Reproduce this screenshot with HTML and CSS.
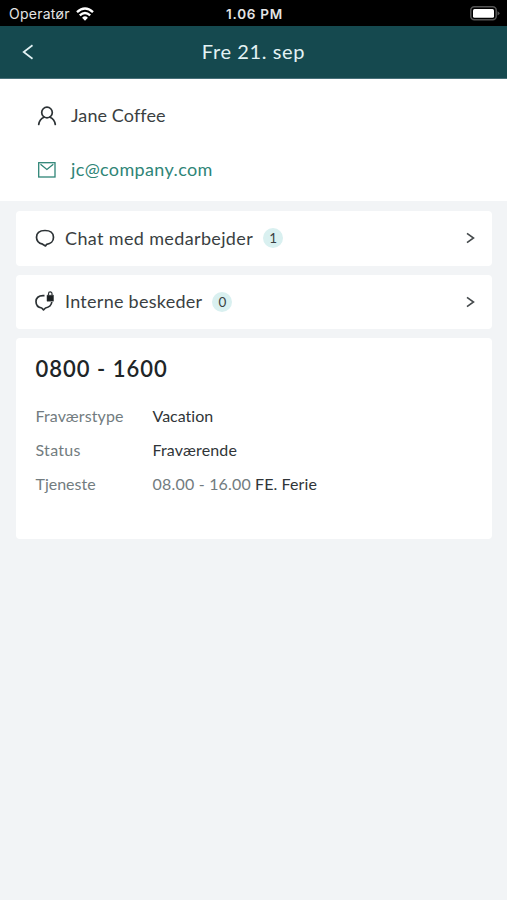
FILE: index.html
```html
<!DOCTYPE html>
<html lang="da">
<head>
<meta charset="utf-8">
<title>Fre 21. sep</title>
<link rel="stylesheet" href="styles.css">
</head>
<body>
<div class="status-bar">
  <div class="carrier"><span>Operatør</span>
    <svg width="18" height="14" viewBox="0 0 18 14" fill="none" stroke="#fff" stroke-width="2.4"><path d="M1 5.1Q9-2.3 17 5.1"/><path d="M3.8 8.3Q9 3.6 14.2 8.3"/><path d="M6.1 10.7Q9 8 11.9 10.7L9 13.7Z" fill="#fff" stroke="none"/></svg>
  </div>
  <div class="clock">1.06 PM</div>
  <svg class="battery" width="30" height="15" viewBox="0 0 30 15"><rect x=".8" y=".8" width="25.4" height="13" rx="3.5" fill="none" stroke="#555" stroke-width="1.5"/><rect x="3" y="3" width="21" height="8.7" rx="1.5" fill="#fff"/><path d="M27.5 5.2Q29.5 6 29.5 7.3T27.5 9.4Z" fill="#555"/></svg>
</div>
<header class="header">
  <svg class="back" width="12" height="16" viewBox="0 0 12 16" fill="none" stroke="#e3f2f4" stroke-width="1.7"><path d="M10.5 1.3 1.7 8l8.800 6.700"/></svg>
  <h1>Fre 21. sep</h1>
</header>
<section class="contact">
  <div class="contact-row">
    <svg width="20" height="20" viewBox="0 0 20 20" fill="none" stroke="#2c3235" stroke-width="1.7" stroke-linecap="round"><circle cx="10" cy="6.5" r="5.3"/><path d="M1.700 18.500C2.300 14.500 4.300 12.300 7 11.200M18.300 18.500C17.700 14.500 15.700 12.300 13 11.200"/></svg>
    <span class="name">Jane Coffee</span>
  </div>
  <div class="contact-row mail">
    <svg width="20" height="20" viewBox="0 0 20 20" fill="none" stroke="#2f8577" stroke-width="1.3"><rect x="1.7" y="2.7" width="16.3" height="14.3"/><path d="m3.500 4.300 6.400 5.200 6.400-5.200"/></svg>
    <a class="address">jc@company.com</a>
  </div>
</section>
<main class="cards">
  <div class="card link">
    <svg width="22" height="22" viewBox="0 0 22 22" fill="none" stroke="#2c3235" stroke-width="1.7" stroke-linejoin="round"><path d="M8.600 17.200C4.700 16.300 2.500 13.500 2.500 10.300C2.500 5.500 6 3.500 11 3.500S19.500 5.500 19.500 10.300C19.500 14.500 16.500 17 12.700 17.300L11.500 18.900Z"/></svg>
    <span class="chat-label">Chat med medarbejder</span><span class="badge">1</span>
    <svg class="chevron" width="9" height="12" viewBox="0 0 9 12"><path d="M1 1.300 7.500 6 1 10.700"/></svg>
  </div>
  <div class="card link">
    <svg width="22" height="22" viewBox="0 0 22 22" fill="none" stroke="#2c3235" stroke-width="1.7" stroke-linejoin="round"><path d="M10.500 4.600H9C4.500 4.600 2 7 2 10.500C2 14 4.500 16.500 7.700 17L9.500 18.900L11.500 17C15 16.300 17.400 14 17.800 11"/><path d="M13 4.200h6.500v6H13z" fill="#1c2022" stroke-width=".5"/><path d="M14.500 4.500V2.700a1.750 1.750 0 0 1 3.500 0v1.800" stroke-width="1.200"/></svg>
    <span class="internal-label">Interne beskeder</span><span class="badge">0</span>
    <svg class="chevron" width="9" height="12" viewBox="0 0 9 12"><path d="M1 1.300 7.500 6 1 10.700"/></svg>
  </div>
  <div class="card shift">
    <h2>0800 - 1600</h2>
    <dl>
      <dt class="type">Fraværstype</dt><dd class="vacation">Vacation</dd>
      <dt class="status">Status</dt><dd class="absent">Fraværende</dd>
      <dt>Tjeneste</dt><dd><span class="time">08.00 - 16.00</span><span class="duty">FE. Ferie</span></dd>
    </dl>
  </div>
</main>
</body>
</html>
```

FILE: styles.css
```css
* { box-sizing: border-box; }
body { margin: 0; min-height: 900px; background: #f2f4f6; color: #3a3f42; font-family: Lato, "Noto Sans", sans-serif; font-variant-ligatures: none; white-space: nowrap; }
svg { display: block; flex: none; }
h1, h2, dl, dd { margin: 0; }
.status-bar { height: 26px; padding: 0 7px 0 9px; background: #000; color: #e4e4e4; display: grid; grid-template-columns: 1fr auto 1fr; align-items: center; font: 14px/26px Inter, sans-serif; }
.carrier { display: flex; align-items: center; gap: 6px; }
.carrier span { padding-top: 1px; letter-spacing: .25px; }
.clock { font-weight: 600; font-size: 13.5px; letter-spacing: .75px; padding-top: 1px; }
.battery { justify-self: end; }
.header { height: 53px; background: #15494f; color: #e3f2f4; display: grid; grid-template-columns: 1fr auto 1fr; align-items: center; padding: 0 22px; border-bottom: 1px solid #476f78; }
h1 { margin-top: -2px; font-size: 20px; line-height: 26px; font-weight: 400; letter-spacing: .62px; }
.contact { height: 122px; padding: 10px 37px; background: #fff; }
.contact-row { height: 54px; display: flex; align-items: center; gap: 14px; font-size: 18px; }
.contact-row span, .contact-row a { margin-top: -2px; }
.name { letter-spacing: .1px; }
.address { letter-spacing: .36px; }
.mail { color: #2f8577; }
.cards { padding: 10px 15px 0 16px; display: flex; flex-direction: column; gap: 9px; }
.card { background: #fff; border-radius: 4px; }
.link { height: 54.5px; padding: 0 17px 0 18px; display: flex; align-items: center; font-size: 18px; }
.link > span:first-of-type { margin-left: 9px; }
.chat-label { letter-spacing: .36px; }
.internal-label { margin-top: -1px; letter-spacing: .27px; }
.badge { width: 20px; height: 20px; margin-left: 10px; border-radius: 50%; background: #d9f0f0; font-size: 13.5px; line-height: 20px; text-align: center; }
.chevron { margin-left: auto; fill: none; stroke: #454a4c; stroke-width: 1.6; }
.shift { height: 201px; padding: 17px 19.5px; }
h2 { font-size: 22px; line-height: 28px; font-weight: 600; color: #202527; letter-spacing: 1px; }
dl { margin-top: 15px; display: grid; grid-template-columns: 117px auto; grid-auto-rows: 34px; align-items: center; font-size: 16px; color: #303538; }
dt, .time { color: #727c80; }
.type { letter-spacing: .1px; }
.status { letter-spacing: .3px; }
.absent { letter-spacing: .15px; }
.time { letter-spacing: .2px; }
.duty { margin-left: 4px; letter-spacing: .1px; }
```
